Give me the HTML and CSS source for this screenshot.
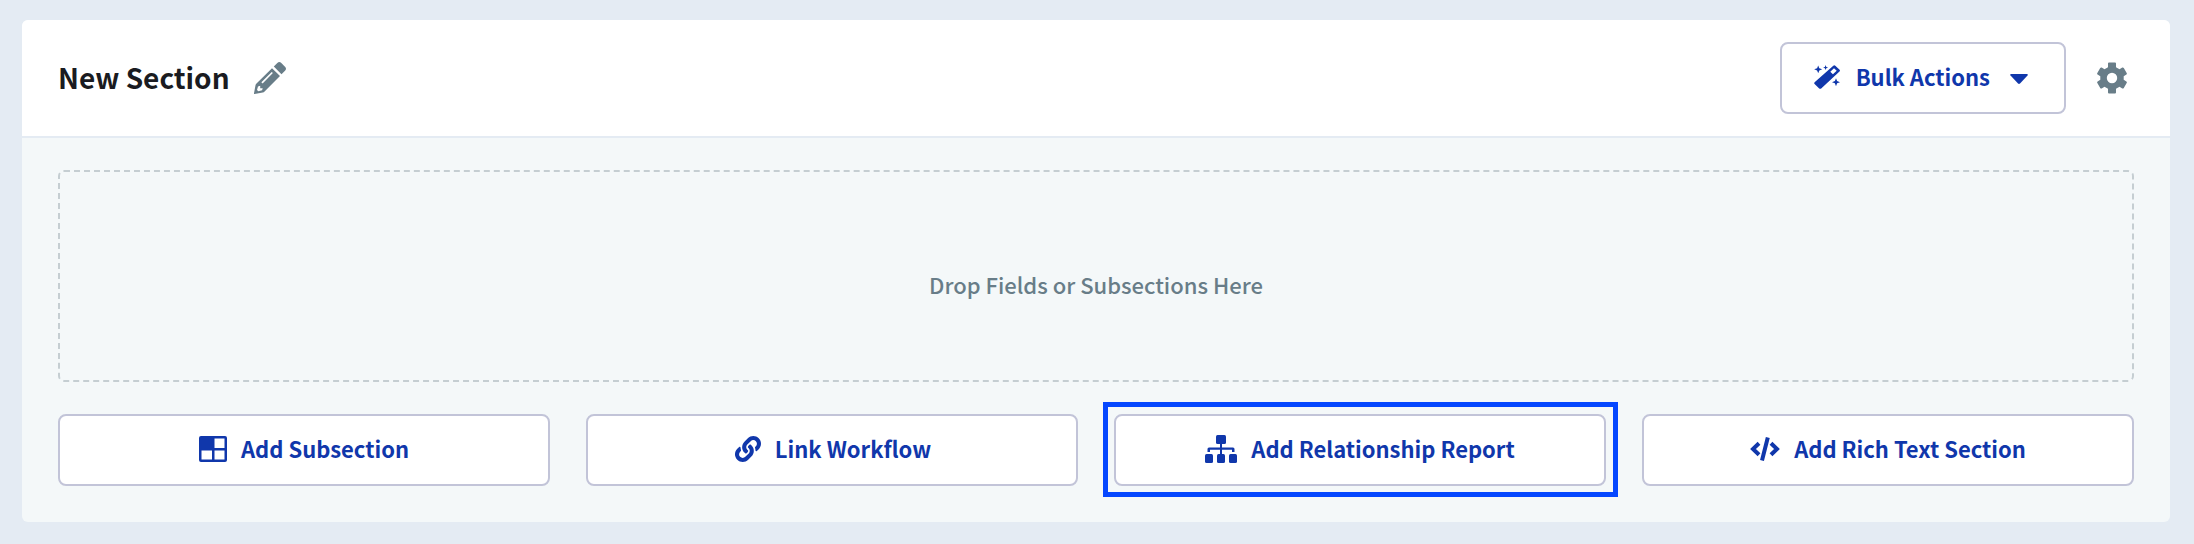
FILE: index.html
```html
<!DOCTYPE html>
<html lang="en">
<head>
<meta charset="utf-8">
<title>New Section</title>
<link rel="stylesheet" href="styles.css">
</head>
<body>
<main class="card">
  <header class="card-header">
    <div class="title-group">
      <h1 class="title">New Section</h1>
      <button class="icon-button" type="button" aria-label="Edit section name">
        <svg width="32" height="32" viewBox="0 0 32 32" fill="currentColor" aria-hidden="true">
          <path d="M19.8 4.6 23.3 1Q25.3-.8 27.3 1L31 4.700Q33 6.700 31 8.700L27.500 12.200Z"/>
          <path fill-rule="evenodd" d="M18 6.200 26 14.100 10.600 29.400Q9.800 30.200 8.800 30.500L.6 32Q-.1 32 0 31.300L1.500 23.200Q1.700 22.200 2.500 21.400ZM18.400 10.400Q17.800 9.800 17.200 10.400L7.900 19.700Q7.300 20.300 7.800 20.900Q8.400 21.500 9.100 20.900L18.400 11.600Q19 11 18.400 10.400ZM4 24.500 3 27.900 4.400 29.200 8.100 28.300 8.700 26.200H6.200V23.700Z"/>
        </svg>
      </button>
    </div>
    <div class="header-actions">
      <button class="button button-menu" type="button" aria-haspopup="menu">
        <svg width="26" height="24" viewBox="0 0 26 24" fill="currentColor" aria-hidden="true">
          <path fill-rule="evenodd" d="M.6 17.200 19.300.7Q20.300-.2 21.300.7L25.600 4.700Q26.500 5.700 25.500 6.600L7.200 23.400Q6.200 24.300 5.200 23.400L.6 19.100Q-.4 18.100.6 17.200ZM20 3.300 16.300 6.700 18.900 9.300 22.700 5.800Z"/>
          <path d="M4.200.4 5.300 3.200 8.200 4.300 5.300 5.400 4.200 8.200 3.100 5.400.2 4.300 3.100 3.200ZM11.600.1 12.300 1.900 14.100 2.600 12.300 3.300 11.600 5.100 10.900 3.300 9.100 2.600 10.900 1.900ZM22 13.200 23.100 16.100 26 17.200 23.100 18.300 22 21.200 20.900 18.300 18 17.200 20.900 16.100Z"/>
        </svg>
        <span class="button-label">Bulk Actions</span>
        <svg class="caret" width="18" height="10" viewBox="0 0 18 10" fill="currentColor" aria-hidden="true">
          <path d="M1 0H17Q18.500.4 17.500 1.600L10 9.500Q9 10.300 8 9.500L.5 1.600Q-.5.4 1 0Z"/>
        </svg>
      </button>
      <button class="icon-button" type="button" aria-label="Section settings">
        <svg width="32" height="32" viewBox="0 0 32 32" fill="currentColor" aria-hidden="true">
          <path fill-rule="evenodd" d="M13 .5H19Q20 .5 20 1.500V5.200L23.500 7.200 26.300 5.500Q27.200 5.200 27.800 6L30.800 11.200Q31.200 12 30.400 12.600L27.700 14.200V17.800L30.400 19.400Q31.200 20 30.800 20.800L27.800 26Q27.200 26.800 26.300 26.500L23.500 24.800 20 26.800V30.500Q20 31.500 19 31.500H13Q12 31.500 12 30.500V26.800L8.500 24.800 5.700 26.500Q4.800 26.800 4.200 26L1.200 20.800Q.8 20 1.600 19.400L4.300 17.800V14.200L1.600 12.600Q.8 12 1.200 11.200L4.200 6Q4.800 5.200 5.700 5.500L8.500 7.200 12 5.200V1.500Q12 .5 13 .5ZM16 10.800A5.200 5.200 0 1 0 16 21.200 5.200 5.200 0 0 0 16 10.800Z"/>
        </svg>
      </button>
    </div>
  </header>
  <section class="card-body">
    <div class="dropzone">Drop Fields or Subsections Here</div>
    <div class="actions">
      <button class="button" type="button">
        <svg width="28" height="26" viewBox="0 0 28 26" fill="currentColor" aria-hidden="true">
          <path fill-rule="evenodd" d="M2 0H26Q28 0 28 2V24Q28 26 26 26H2Q0 26 0 24V2Q0 0 2 0ZM15.500 2.500V12H25.500V2.500ZM2.500 14.500V23.500H13V14.500ZM15.500 14.500V23.500H25.500V14.500Z"/>
        </svg>
        <span class="button-label">Add Subsection</span>
      </button>
      <button class="button" type="button">
        <svg width="28" height="26" viewBox="-40 0 552 512" fill="currentColor" aria-hidden="true">
          <path d="M326.612 185.391c59.747 59.809 58.927 155.698.36 214.59-.11.12-.24.25-.36.37l-67.2 67.2c-59.27 59.27-155.699 59.262-214.96 0-59.27-59.26-59.27-155.7 0-214.96l37.106-37.106c9.84-9.84 26.786-3.3 27.294 10.606.648 17.722 3.826 35.527 9.69 52.721 1.986 5.822.567 12.262-3.783 16.612l-13.087 13.087c-28.026 28.026-28.905 73.66-1.155 101.96 28.024 28.579 74.086 28.749 102.325.51l67.2-67.19c28.191-28.191 28.073-73.757 0-101.83-3.701-3.694-7.429-6.564-10.341-8.569a16.037 16.037 0 0 1-6.947-12.606c-.396-10.567 3.348-21.456 11.698-29.806l21.054-21.055c5.521-5.521 14.182-6.199 20.584-1.731a152.482 152.482 0 0 1 20.522 17.197zM467.547 44.449c-59.261-59.262-155.69-59.27-214.96 0l-67.2 67.2c-.12.12-.25.25-.36.37-58.566 58.892-59.387 154.781.36 214.59a152.454 152.454 0 0 0 20.521 17.196c6.402 4.468 15.064 3.789 20.584-1.731l21.054-21.055c8.35-8.35 12.094-19.239 11.698-29.806a16.037 16.037 0 0 0-6.947-12.606c-2.912-2.005-6.64-4.875-10.341-8.569-28.073-28.073-28.191-73.639 0-101.83l67.2-67.19c28.239-28.239 74.3-28.069 102.325.51 27.75 28.3 26.872 73.934-1.155 101.96l-13.087 13.087c-4.35 4.35-5.769 10.79-3.783 16.612 5.864 17.194 9.042 34.999 9.69 52.721.509 13.906 17.454 20.446 27.294 10.606l37.106-37.106c59.271-59.259 59.271-155.699.001-214.959z"/>
        </svg>
        <span class="button-label">Link Workflow</span>
      </button>
      <button class="button is-highlighted" type="button">
        <svg width="32" height="28" viewBox="0 0 32 28" fill="currentColor" aria-hidden="true">
          <rect x="11" y="0" width="10" height="9" rx="1.500"/>
          <path d="M15 8H17V12.500H28Q29.500 12.500 29.500 14V17H27V14.800H17V19H15V14.800H5V17H2.500V14Q2.500 12.500 4 12.500H15Z"/>
          <rect x="0" y="19" width="8" height="9" rx="1.500"/>
          <rect x="12" y="19" width="8" height="9" rx="1.500"/>
          <rect x="24" y="19" width="8" height="9" rx="1.500"/>
        </svg>
        <span class="button-label">Add Relationship Report</span>
      </button>
      <button class="button" type="button">
        <svg width="30" height="24" viewBox="0 0 30 24" fill="none" stroke="currentColor" stroke-width="4" aria-hidden="true">
          <path d="M9 6.200 3 12 9 17.800M21 6.200 27 12 21 17.800M17.800.5 12 23.500"/>
        </svg>
        <span class="button-label">Add Rich Text Section</span>
      </button>
    </div>
  </section>
</main>
</body>
</html>
```
FILE: styles.css
```css
* {
  box-sizing: border-box;
}

body {
  margin: 0;
  padding: 20px 24px 22px 22px;
  background: #e4ebf3;
  color: #1a1b21;
  font-family: "Noto Sans CJK JP", "Noto Sans CJK SC", "Open Sans", sans-serif;
}

svg {
  display: block;
  flex: none;
  overflow: visible;
}

.card {
  overflow: hidden;
  border-radius: 6px;
  background: #f4f8f9;
}

.card-header {
  display: flex;
  align-items: center;
  justify-content: space-between;
  padding: 22px 42px 22px 36px;
  border-bottom: 2px solid #e4ebf3;
  background: #fff;
}

.title-group {
  display: flex;
  align-items: center;
  gap: 24px;
}

.title {
  margin: 0;
  padding-bottom: 2px;
  font-size: 28px;
  font-weight: 600;
  line-height: 40px;
}

.header-actions {
  display: flex;
  align-items: center;
  gap: 30px;
}

.icon-button {
  padding: 0;
  border: 0;
  background: none;
  color: #687d88;
  cursor: pointer;
}

.button {
  position: relative;
  display: flex;
  align-items: center;
  justify-content: center;
  gap: 14px;
  height: 72px;
  padding: 0 32px 2px;
  border: 2px solid #c2c4d8;
  border-radius: 8px;
  background: #fff;
  color: #1037ab;
  font-family: inherit;
  font-size: 22px;
  font-weight: 600;
  line-height: 32px;
  white-space: nowrap;
  cursor: pointer;
}

.button-label {
  padding-bottom: 2px;
}

.button-menu {
  gap: 16px;
  padding: 0 36px 2px 32px;
}

.caret {
  margin: 4px 0 0 4px;
}

.is-highlighted::after {
  content: "";
  position: absolute;
  inset: -14px -14px -13px -13px;
  border: 5px solid #0547ff;
  pointer-events: none;
}

.card-body {
  display: grid;
  gap: 32px;
  padding: 32px 36px 36px;
}

.dropzone {
  display: flex;
  align-items: center;
  justify-content: center;
  min-height: 212px;
  padding-top: 16px;
  border: 2px dashed #c5ced2;
  border-radius: 6px;
  color: #687d88;
  font-size: 22px;
  font-weight: 500;
  line-height: 32px;
}

.actions {
  display: grid;
  grid-template-columns: repeat(4, 1fr);
  gap: 36px;
}
```
